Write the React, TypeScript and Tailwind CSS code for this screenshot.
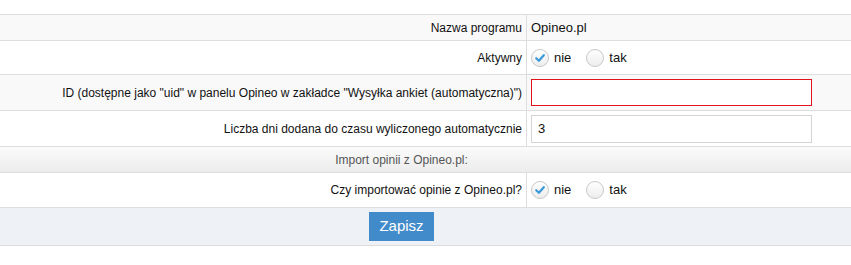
import type { ReactNode } from 'react'

function Radio({ checked }: { checked?: boolean }): React.JSX.Element {
  return (
    <svg width="18" height="18" viewBox="0 0 18 18" className="shrink-0">
      <defs>
        <linearGradient id="rg" x1="0" y1="0" x2="0" y2="1">
          <stop offset="0" stopColor="#ffffff" />
          <stop offset="1" stopColor="#ececec" />
        </linearGradient>
      </defs>
      <circle cx="9" cy="9" r="8.5" fill="url(#rg)" stroke="#c8c8c8" />
      {checked && (
        <path
          d="M5.2 9.2 L7.9 11.8 L12.8 6.2"
          fill="none"
          stroke="#3a9ad9"
          strokeWidth="2.2"
          strokeLinecap="round"
          strokeLinejoin="round"
        />
      )}
    </svg>
  )
}

function RadioPair(): React.JSX.Element {
  return (
    <div className="flex items-center text-[13px]">
      <Radio checked />
      <span className="ml-[5px]">nie</span>
      <span className="ml-[15px] flex items-center">
        <Radio />
        <span className="ml-[5px]">tak</span>
      </span>
    </div>
  )
}

interface RowProps {
  label: string
  height: string
  bg?: string
  children: ReactNode
}

function Row({ label, height, bg = 'bg-white', children }: RowProps): React.JSX.Element {
  return (
    <div className={`flex border-b border-[#dddddd] ${bg}`}>
      <div className={`flex w-[527px] shrink-0 items-center justify-end border-r border-[#dddddd] pr-[4px] ${height}`}>
        {label}
      </div>
      <div className="flex flex-1 items-center pl-[4px]">{children}</div>
    </div>
  )
}

export default function App(): React.JSX.Element {
  return (
    <div
      className="h-[265px] w-[851px] bg-white text-[12px] text-[#111111]"
      style={{ fontFamily: '"Liberation Sans", Arial, sans-serif' }}
    >
      <div className="h-[14px]" />
      <div className="border-t border-[#dddddd]">
        <Row label="Nazwa programu" height="h-[25px]" bg="bg-[#f9f9f9]">
          <span className="text-[13px]">Opineo.pl</span>
        </Row>
        <Row label="Aktywny" height="h-[33px]">
          <RadioPair />
        </Row>
        <Row
          label={'ID (dostępne jako "uid" w panelu Opineo w zakładce "Wysyłka ankiet (automatyczna)")'}
          height="h-[35px]"
          bg="bg-[#f9f9f9]"
        >
          <div className="h-[27px] w-[281px] bg-[#e3131b] p-px">
            <div className="h-full w-full bg-white" />
          </div>
        </Row>
        <Row label="Liczba dni dodana do czasu wyliczonego automatycznie" height="h-[35px]">
          <div className="flex h-[28px] w-[281px] items-center border border-solid border-[#d4d4d4] bg-white px-[6px] text-[13px]">
            3
          </div>
        </Row>
        <div className="flex h-[26px] items-center justify-center border-b border-[#dddddd] bg-gradient-to-b from-[#fbfbfb] to-[#ececec] pr-[48px] text-[#555555]">
          Import opinii z Opineo.pl:
        </div>
        <Row label="Czy importować opinie z Opineo.pl?" height="h-[34px]">
          <RadioPair />
        </Row>
        <div className="flex h-[38px] items-center justify-center border-b border-[#dddddd] bg-[#eef1f5] pr-[48px]">
          <button className="h-[29px] w-[65px] bg-[#428bca] text-[15px] text-white">Zapisz</button>
        </div>
      </div>
    </div>
  )
}
